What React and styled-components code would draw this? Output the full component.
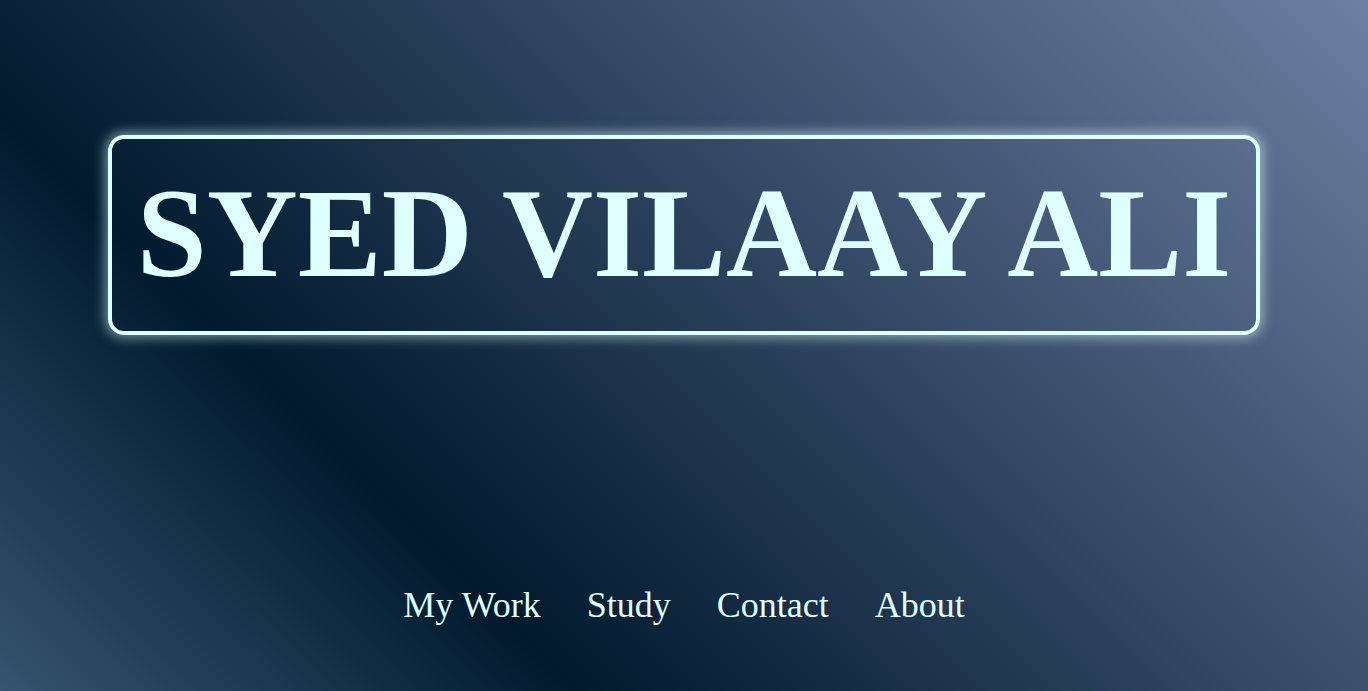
import React from 'react';
import styled, { createGlobalStyle } from 'styled-components';

// --- Global ---
const GlobalStyle = createGlobalStyle`
  html, body {
    margin: 0;
    padding: 0;
    height: 100%;
  }
  body {
    font-family: "Liberation Serif", "Times New Roman", serif;
    background: linear-gradient(45deg, #36536f 0%, #011a2e 28%, #6d7fa3 100%);
    background-attachment: fixed;
    min-height: 100vh;
  }
`;

// --- Styled Components ---
const Page = styled.main`
  min-height: 100vh;
  display: flex;
  flex-direction: column;
  align-items: center;
  padding-top: 135px;
  box-sizing: border-box;
`;

const NameBox = styled.div`
  border: 4px solid #e0ffff;
  border-radius: 16px;
  padding: 23px 25px 24px;
  box-shadow: 0 0 12px 3px rgba(224, 255, 255, 0.5);
`;

const Name = styled.h1`
  margin: 0;
  font-size: 126px;
  font-weight: 700;
  color: #e0ffff;
  white-space: nowrap;
  line-height: 1.15;
`;

const Nav = styled.nav`
  display: flex;
  gap: 46px;
  margin-top: 249px;
`;

const NavLink = styled.a`
  font-size: 36px;
  color: #e0ffff;
  text-decoration: none;
  cursor: pointer;
`;

const links = ['My Work', 'Study', 'Contact', 'About'];

function App() {
  return (
    <>
      <GlobalStyle />
      <Page>
        <NameBox>
          <Name>SYED VILAAY ALI</Name>
        </NameBox>
        <Nav>
          {links.map((l) => (
            <NavLink key={l}>{l}</NavLink>
          ))}
        </Nav>
      </Page>
    </>
  );
}

export default App;
